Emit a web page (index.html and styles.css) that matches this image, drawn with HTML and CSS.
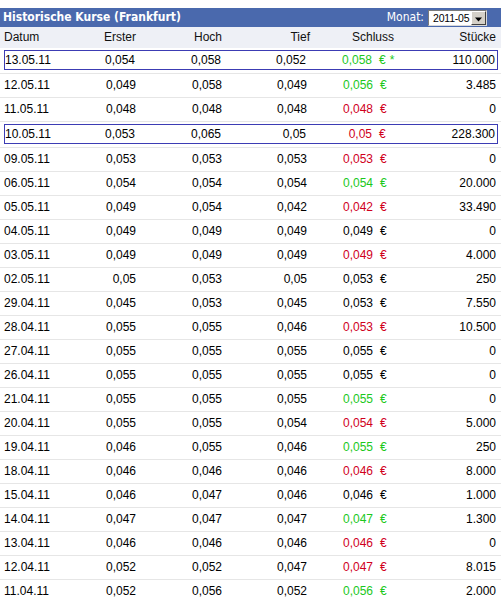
FILE: index.html
```html
<!DOCTYPE html>
<html lang="de">
<head>
<meta charset="utf-8">
<title>Historische Kurse (Frankfurt)</title>
<link rel="stylesheet" href="styles.css">
</head>
<body>
<div class="panel">
  <div class="titlebar">
    <span class="title">Historische Kurse (Frankfurt)</span>
    <div class="month">
      <span class="month-label">Monat:</span>
      <div class="select">
        <span class="select-value">2011-05</span>
        <span class="select-btn"><svg width="9" height="5" viewBox="0 0 9 5"><path d="M1 0.5h7L4.5 4.5z" fill="#000"/></svg></span>
      </div>
    </div>
  </div>
  <div class="row head">
    <div class="cells">
      <span class="c-date">Datum</span>
      <span class="c-num">Erster</span>
      <span class="c-num">Hoch</span>
      <span class="c-num c-tief">Tief</span>
      <span class="c-close-h">Schluss</span>
      <span class="c-num">Stücke</span>
    </div>
  </div>
  <div id="rows"></div>
</div>
<script src="app.js"></script>
</body>
</html>
```
FILE: styles.css
```css
html, body {
  margin: 0;
  padding: 0;
  background: #fff;
}
body {
  padding-top: 8px;
  font-family: "Liberation Sans", Arial, sans-serif;
  font-size: 12px;
  color: #000;
}
.panel {
  width: 501px;
}
.titlebar {
  height: 19px;
  background: #4a69ad;
  color: #fff;
  display: flex;
  align-items: center;
  justify-content: space-between;
  padding: 0 14px 0 3px;
  font-family: "DejaVu Sans Condensed", "DejaVu Sans", sans-serif;
  font-stretch: condensed;
}
.title {
  font-weight: bold;
  font-size: 12px;
  line-height: 19px;
}
.month {
  display: flex;
  align-items: center;
  gap: 4px;
}
.month-label {
  font-size: 12px;
  line-height: 19px;
}
.select {
  display: flex;
  align-items: stretch;
  height: 16px;
  width: 59px;
  box-sizing: border-box;
  background: #fff;
  border: 1px solid #7a7a7a;
  border-right-color: #d8d8d8;
  border-bottom-color: #d8d8d8;
  margin-top: 1px;
}
.select-value {
  flex: 1;
  color: #000;
  font-family: "Liberation Sans", Arial, sans-serif;
  font-size: 10.5px;
  line-height: 14px;
  padding-left: 4px;
  letter-spacing: -0.2px;
}
.select-btn {
  width: 15px;
  box-sizing: border-box;
  background: #d4d0c8;
  border: 1px solid;
  border-color: #fff #404040 #404040 #fff;
  display: flex;
  align-items: flex-end;
  justify-content: center;
  padding-bottom: 2px;
}
.select-btn svg {
  display: block;
}
.row {
  height: 24px;
  box-sizing: border-box;
  border-bottom: 1px solid #e6e6e6;
}
.row.head {
  height: 21px;
  background: #eef0f6;
  border-bottom: none;
  color: #111;
}
.cells {
  display: grid;
  grid-template-columns: 76px 56px 86px 85px 93px 96px;
  padding-left: 4px;
  line-height: 23px;
  height: 23px;
  white-space: nowrap;
}
.row.head .cells {
  line-height: 21px;
  height: 21px;
}
.row.mark .cells {
  margin: 2px 3px 1px 4px;
  height: 20px;
  box-sizing: border-box;
  border: 1px solid #3c3cb4;
  padding-left: 0;
  line-height: 18px;
  grid-template-columns: 75px 55px 86px 85px 93px 96px;
}
.c-date {
  text-align: left;
}
.c-num {
  text-align: right;
}
.c-tief {
  margin-right: -3px;
}
.c-close-h {
  padding-left: 45px;
}
.c-close {
  display: flex;
}
.c-close .v {
  width: 66px;
  text-align: right;
}
.c-close .cur {
  margin-left: 7px;
}
.c-close .star {
  margin-left: 4px;
}
.up { color: #1cc81c; }
.down { color: #d0001c; }
.flat { color: #000; }
```
FILE: app.js
```js
var data = [
  ["13.05.11","0,054","0,058","0,052","0,058","up","110.000",true,true],
  ["12.05.11","0,049","0,058","0,049","0,056","up","3.485"],
  ["11.05.11","0,048","0,048","0,048","0,048","down","0"],
  ["10.05.11","0,053","0,065","0,05","0,05","down","228.300",true],
  ["09.05.11","0,053","0,053","0,053","0,053","down","0"],
  ["06.05.11","0,054","0,054","0,054","0,054","up","20.000"],
  ["05.05.11","0,049","0,054","0,042","0,042","down","33.490"],
  ["04.05.11","0,049","0,049","0,049","0,049","flat","0"],
  ["03.05.11","0,049","0,049","0,049","0,049","down","4.000"],
  ["02.05.11","0,05","0,053","0,05","0,053","flat","250"],
  ["29.04.11","0,045","0,053","0,045","0,053","flat","7.550"],
  ["28.04.11","0,055","0,055","0,046","0,053","down","10.500"],
  ["27.04.11","0,055","0,055","0,055","0,055","flat","0"],
  ["26.04.11","0,055","0,055","0,055","0,055","flat","0"],
  ["21.04.11","0,055","0,055","0,055","0,055","up","0"],
  ["20.04.11","0,055","0,055","0,054","0,054","down","5.000"],
  ["19.04.11","0,046","0,055","0,046","0,055","up","250"],
  ["18.04.11","0,046","0,046","0,046","0,046","down","8.000"],
  ["15.04.11","0,046","0,047","0,046","0,046","flat","1.000"],
  ["14.04.11","0,047","0,047","0,047","0,047","up","1.300"],
  ["13.04.11","0,046","0,046","0,046","0,046","down","0"],
  ["12.04.11","0,052","0,052","0,047","0,047","down","8.015"],
  ["11.04.11","0,052","0,056","0,052","0,056","up","2.000"]
];
var html = "";
data.forEach(function (d) {
  html += '<div class="row' + (d[7] ? ' mark' : '') + '"><div class="cells">' +
    '<span class="c-date">' + d[0] + '</span>' +
    '<span class="c-num">' + d[1] + '</span>' +
    '<span class="c-num">' + d[2] + '</span>' +
    '<span class="c-num">' + d[3] + '</span>' +
    '<span class="c-close ' + d[5] + '"><span class="v">' + d[4] + '</span><span class="cur">€</span>' +
    (d[8] ? '<span class="star">*</span>' : '') + '</span>' +
    '<span class="c-num">' + d[6] + '</span>' +
    '</div></div>';
});
document.getElementById("rows").innerHTML = html;
```
